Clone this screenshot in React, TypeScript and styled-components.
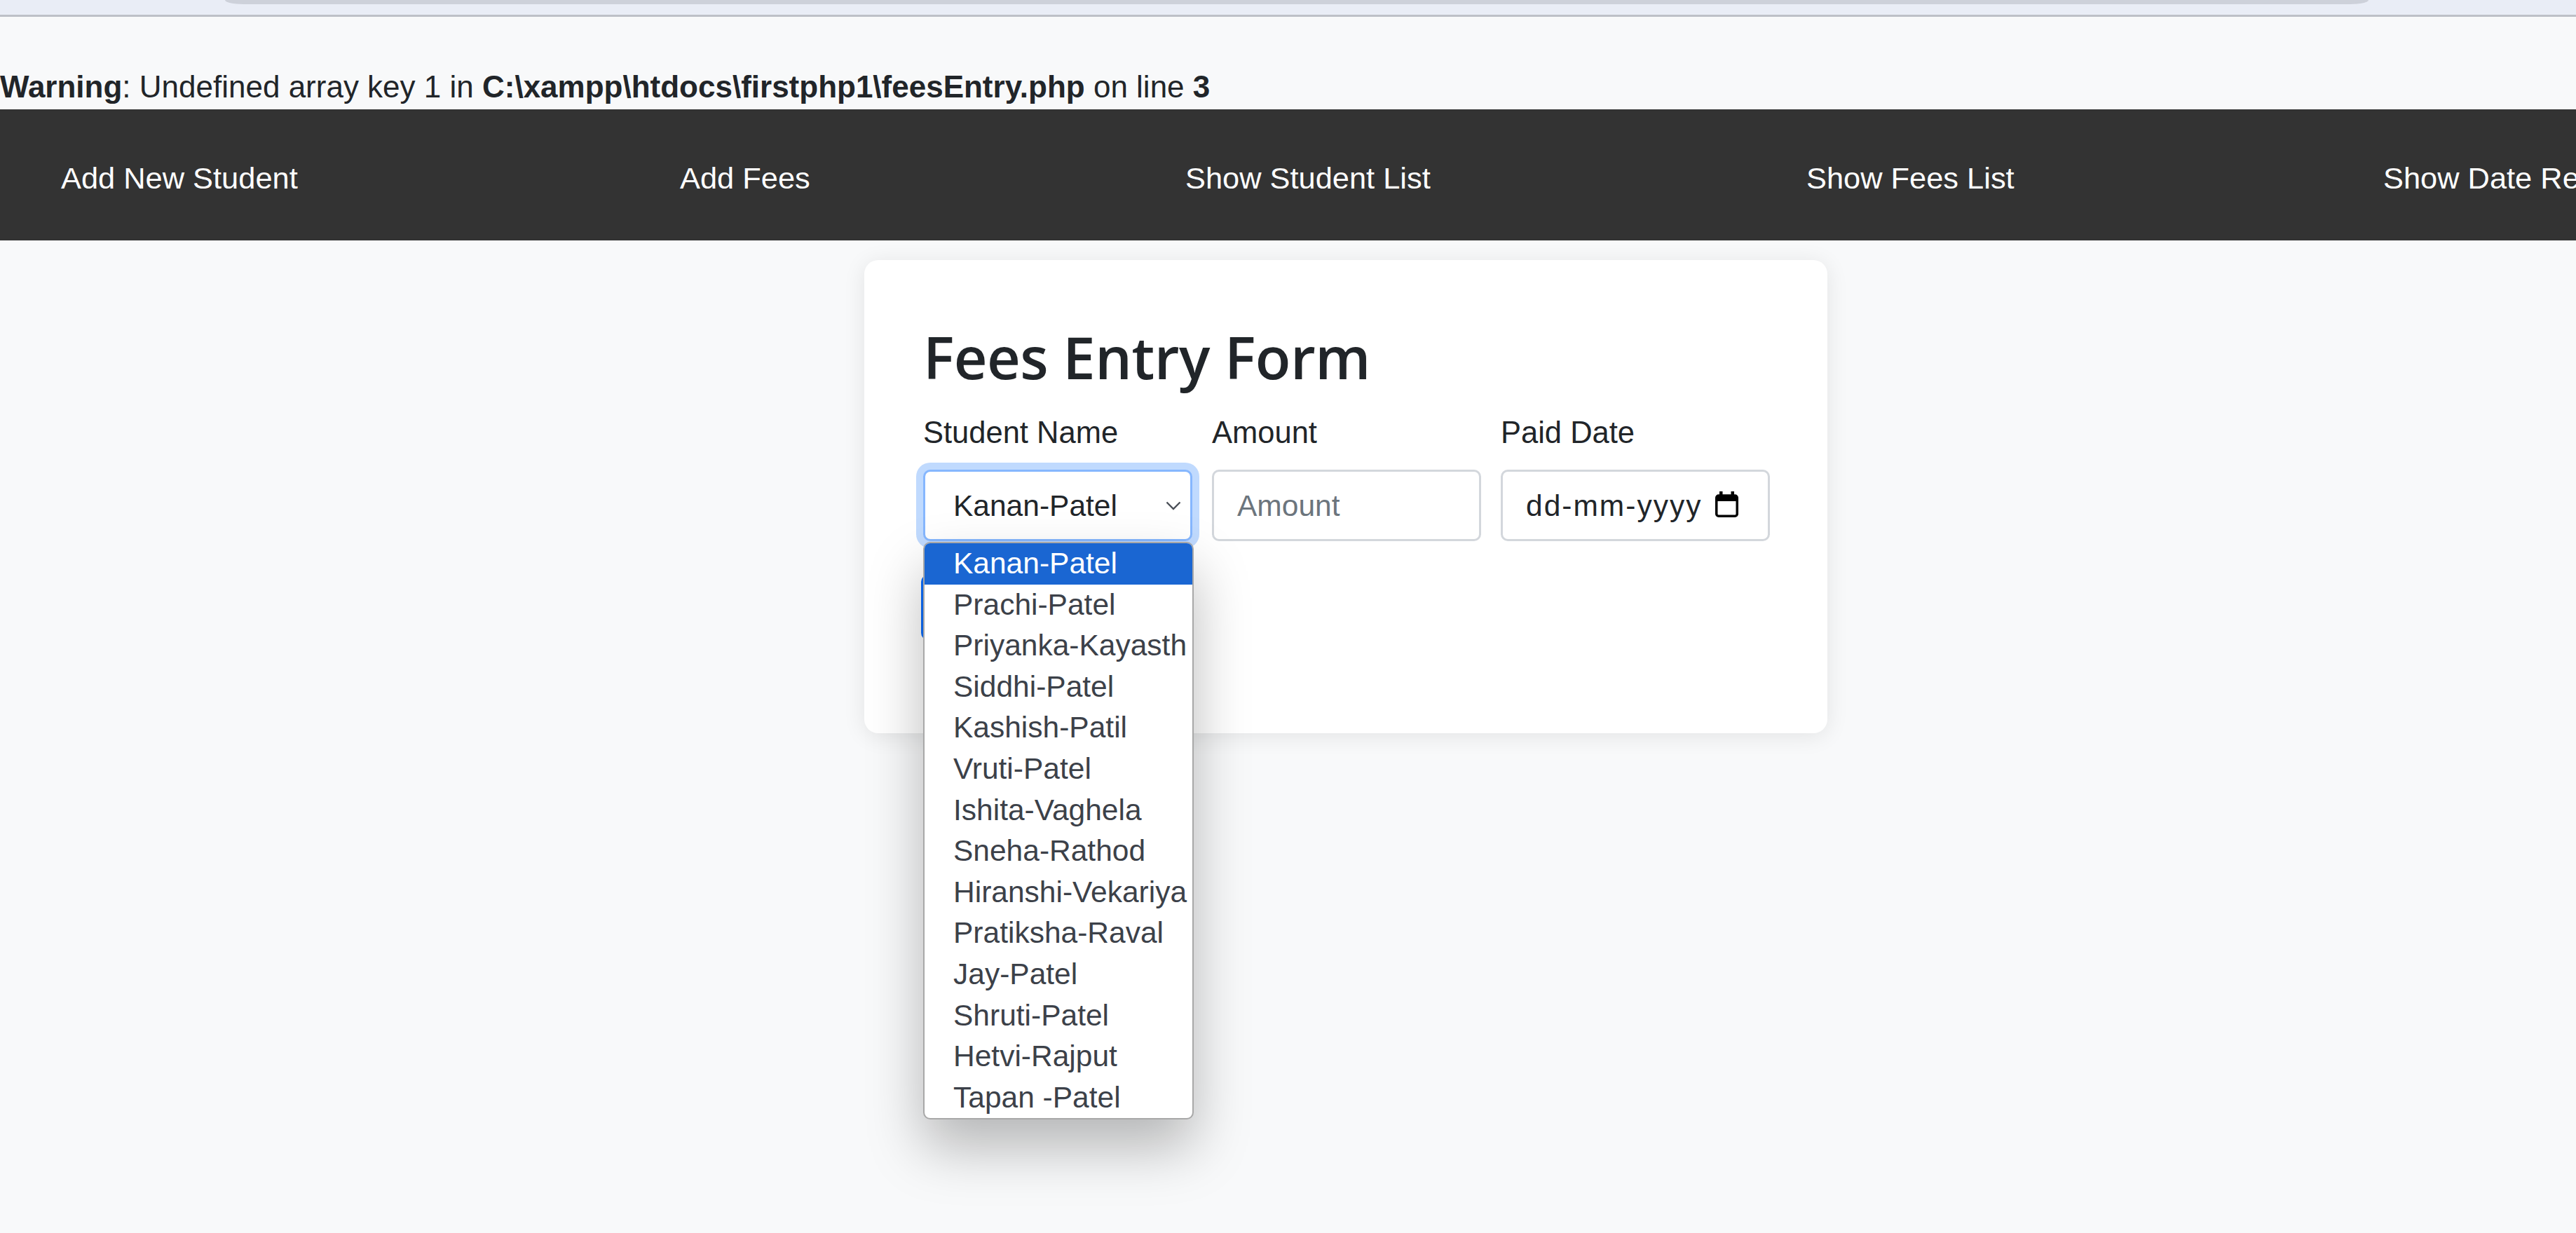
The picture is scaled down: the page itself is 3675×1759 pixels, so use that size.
import React from "react";
import styled, { createGlobalStyle } from "styled-components";

const GlobalStyle = createGlobalStyle`
  html, body {
    margin: 0;
    padding: 0;
    background: #f8f9fa;
    overflow: hidden;
  }
  body {
    font-family: "Liberation Sans", Arial, sans-serif;
    color: #212529;
  }
  * { box-sizing: border-box; }
`;

const Page = styled.div`
  width: 3840px;
  min-height: 1759px;
  background: #f8f9fa;
`;

const BrowserStrip = styled.div`
  height: 24px;
  background: #e9edf6;
  border-bottom: 3px solid #bdc0c7;
`;

const AddressBar = styled.div`
  margin-left: 321px;
  width: 3058px;
  height: 6px;
  background: #cdd1da;
  border-radius: 0 0 26px 26px / 0 0 6px 6px;
`;

const Warning = styled.div`
  margin-top: 68px;
  font-size: 44px;
  line-height: 64px;
  color: #212529;
  white-space: nowrap;
`;

const Nav = styled.nav`
  height: 187px;
  background: #333333;
  display: grid;
  grid-template-columns: 883px 721px 886px 823px auto;
  align-items: center;
  padding: 9px 0 0 87px;
`;

const NavLink = styled.a`
  color: #ffffff;
  font-size: 43.4px;
  line-height: 66px;
  text-decoration: none;
  white-space: nowrap;
`;

const Card = styled.form`
  width: 1374px;
  margin: 28px auto 0;
  background: #ffffff;
  border-radius: 20px;
  box-shadow: 0 4px 32px rgba(0, 0, 0, 0.09);
  padding: 85px 82px 133px 84px;
`;

const Title = styled.h2`
  margin: 0 0 22px;
  font-family: "Open Sans", "Liberation Sans", sans-serif;
  font-weight: 600;
  font-size: 83px;
  line-height: 106px;
  color: #212529;
  letter-spacing: -0.5px;
`;

const Fields = styled.div`
  display: grid;
  grid-template-columns: repeat(3, 384px);
  column-gap: 28px;
`;

const Field = styled.div`
  display: flex;
  flex-direction: column;
`;

const Label = styled.label`
  font-size: 43.5px;
  line-height: 66px;
  margin-bottom: 20px;
  color: #212529;
`;

const Control = styled.div<{ $focused?: boolean }>`
  position: relative;
  height: 102px;
  border: 3px solid ${(p) => (p.$focused ? "#86b7fe" : "#d3d7dc")};
  border-radius: 10px;
  background: #ffffff;
  box-shadow: ${(p) => (p.$focused ? "0 0 0 10px #c0dafe" : "none")};
  display: flex;
  align-items: center;
  padding: 2px 0 0 ${(p) => (p.$focused ? "40px" : "33px")};
  font-size: 42.5px;
  line-height: 66px;
`;

const ValueText = styled.span<{ $muted?: boolean }>`
  color: ${(p) => (p.$muted ? "#6c757d" : "#212529")};
  white-space: nowrap;
`;

const DateText = styled.span`
  color: #212529;
  white-space: nowrap;
  letter-spacing: 2px;
`;

const Chevron = styled.svg`
  position: absolute;
  right: 13px;
  top: 42px;
  width: 22px;
  height: 13px;
`;

const CalendarIcon = styled.svg`
  position: absolute;
  right: 42px;
  top: 28px;
  width: 33px;
  height: 37px;
`;

const Menu = styled.ul`
  position: absolute;
  top: 100px;
  left: -3px;
  width: 386px;
  margin: 0;
  padding: 0;
  list-style: none;
  background: #ffffff;
  border: 2px solid #a8a8a8;
  border-radius: 10px;
  overflow: hidden;
  box-shadow: 0 40px 80px rgba(0, 0, 0, 0.27);
  z-index: 10;
`;

const Option = styled.li<{ $active?: boolean }>`
  height: 58.6px;
  line-height: 58.6px;
  padding-left: 41px;
  font-size: 42.5px;
  white-space: nowrap;
  color: ${(p) => (p.$active ? "#ffffff" : "#3c4149")};
  background: ${(p) => (p.$active ? "#1a66d2" : "transparent")};
`;

const SubmitButton = styled.button`
  display: block;
  margin-top: 48px;
  width: 250px;
  height: 93px;
  border: none;
  border-radius: 10px;
  background: #0d6efd;
  transform: translateX(-3px);
`;

const students = [
  "Kanan-Patel",
  "Prachi-Patel",
  "Priyanka-Kayasth",
  "Siddhi-Patel",
  "Kashish-Patil",
  "Vruti-Patel",
  "Ishita-Vaghela",
  "Sneha-Rathod",
  "Hiranshi-Vekariya",
  "Pratiksha-Raval",
  "Jay-Patel",
  "Shruti-Patel",
  "Hetvi-Rajput",
  "Tapan -Patel",
];

const navItems = [
  "Add New Student",
  "Add Fees",
  "Show Student List",
  "Show Fees List",
  "Show Date Report",
];

export default function App() {
  return (
    <>
      <GlobalStyle />
      <Page>
        <BrowserStrip>
          <AddressBar />
        </BrowserStrip>
        <Warning>
          <b>Warning</b>: Undefined array key 1 in{" "}
          <b>C:\xampp\htdocs\firstphp1\feesEntry.php</b> on line <b>3</b>
        </Warning>
        <Nav>
          {navItems.map((n) => (
            <NavLink key={n} href="#">
              {n}
            </NavLink>
          ))}
        </Nav>
        <Card onSubmit={(e) => e.preventDefault()}>
          <Title>Fees Entry Form</Title>
          <Fields>
            <Field>
              <Label>Student Name</Label>
              <Control $focused>
                <ValueText>Kanan-Patel</ValueText>
                <Chevron viewBox="0 0 22 13">
                  <path d="M1.5 1.5 L11 11 L20.5 1.5" fill="none" stroke="#4a4f57" strokeWidth="2.4" />
                </Chevron>
                <Menu>
                  {students.map((s, i) => (
                    <Option key={s} $active={i === 0}>
                      {s}
                    </Option>
                  ))}
                </Menu>
              </Control>
            </Field>
            <Field>
              <Label>Amount</Label>
              <Control>
                <ValueText $muted>Amount</ValueText>
              </Control>
            </Field>
            <Field>
              <Label>Paid Date</Label>
              <Control>
                <DateText>dd-mm-yyyy</DateText>
                <CalendarIcon viewBox="0 0 33 37">
                  <rect x="6" y="0" width="4.5" height="8" fill="#000" />
                  <rect x="22.5" y="0" width="4.5" height="8" fill="#000" />
                  <rect x="1.75" y="6" width="29.5" height="29.25" rx="3" fill="none" stroke="#000" strokeWidth="3.5" />
                  <rect x="1.75" y="6" width="29.5" height="8" fill="#000" />
                </CalendarIcon>
              </Control>
            </Field>
          </Fields>
          <SubmitButton type="submit" aria-label="Submit" />
        </Card>
      </Page>
    </>
  );
}
